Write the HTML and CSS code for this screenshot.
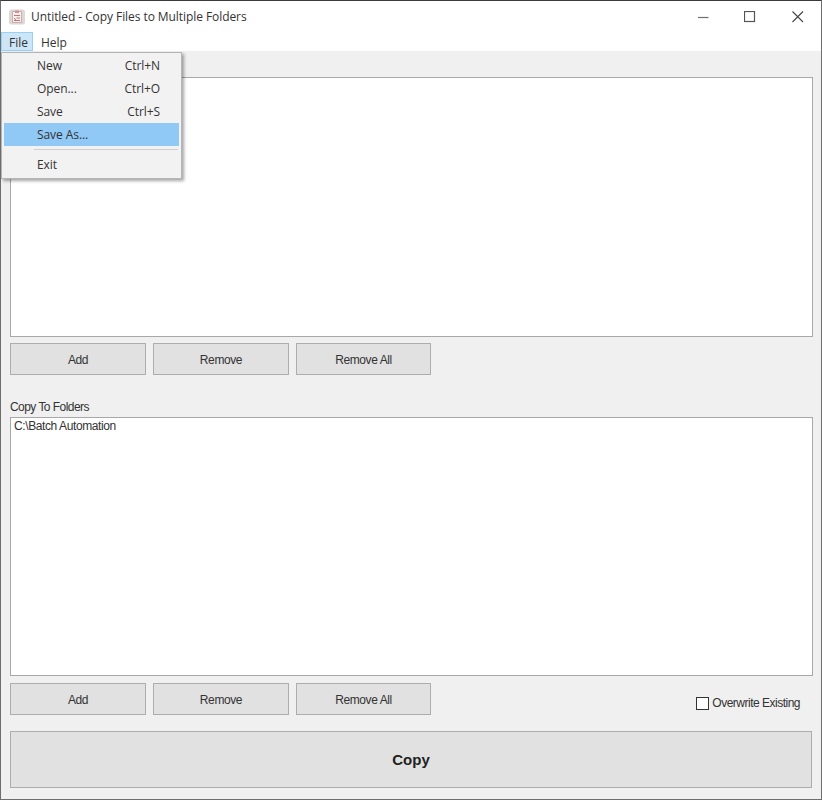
FILE: index.html
```html
<!DOCTYPE html>
<html lang="en">
<head>
<meta charset="utf-8">
<title>Untitled - Copy Files to Multiple Folders</title>
<link rel="stylesheet" href="styles.css">
</head>
<body>
<div class="window">
  <header class="titlebar">
    <svg class="app-icon" width="16" height="16" viewBox="0 0 16 16">
      <rect x="0" y="0.5" width="16" height="15" rx="2.5" fill="#dcd8d6"/>
      <rect x="3.5" y="2.5" width="9" height="11" fill="#f4eeed" stroke="#cfaeb0"/>
      <path d="M5 6.5h6M5 9l2 2M7.5 9H11M5 11.5h6" stroke="#c4747a" stroke-width="1" fill="none"/>
      <rect x="6" y="1.5" width="4" height="2.5" fill="#cf9397"/>
    </svg>
    <span class="title">Untitled - Copy Files to Multiple Folders</span>
    <div class="controls">
      <svg width="12" height="12" viewBox="0 0 12 12"><path d="M0 6.5h10.5" stroke="#6f6f6f" stroke-width="1.2"/></svg>
      <svg width="12" height="12" viewBox="0 0 12 12"><rect x="0.5" y="0.5" width="10" height="10" fill="none" stroke="#555" stroke-width="1.2"/></svg>
      <svg class="close" width="12" height="12" viewBox="0 0 12 12"><path d="M0.5 0.5l10.5 10.5M11 0.5L0.5 11" stroke="#444" stroke-width="1.1" fill="none"/></svg>
    </div>
  </header>
  <nav class="menubar">
    <span class="menu-item menu-open">File</span>
    <span class="menu-item menu-help">Help</span>
  </nav>
  <main class="content">
    <div class="caption"></div>
    <div class="listbox"></div>
    <div class="buttons">
      <button class="btn">Add</button>
      <button class="btn">Remove</button>
      <button class="btn btn-last">Remove All</button>
    </div>
    <label class="caption caption-second">Copy To Folders</label>
    <div class="listbox listbox-second"><div class="entry">C:\Batch Automation</div></div>
    <div class="buttons buttons-second">
      <button class="btn">Add</button>
      <button class="btn">Remove</button>
      <button class="btn btn-last">Remove All</button>
      <div class="overwrite"><span class="check"></span><span>Overwrite Existing</span></div>
    </div>
    <button class="copy">Copy</button>
  </main>
  <div class="dropdown">
    <div class="dd-row"><span>New</span><span>Ctrl+N</span></div>
    <div class="dd-row"><span>Open...</span><span>Ctrl+O</span></div>
    <div class="dd-row"><span>Save</span><span>Ctrl+S</span></div>
    <div class="dd-row dd-active"><span>Save As...</span><span></span></div>
    <div class="dd-sep"></div>
    <div class="dd-row"><span>Exit</span><span></span></div>
  </div>
</div>
</body>
</html>
```
FILE: styles.css
```css
* { box-sizing: border-box; }
html, body { margin: 0; padding: 0; }
body { width: 822px; height: 800px; overflow: hidden; background: #f0f0f0; }
.window {
  position: relative;
  width: 822px;
  height: 800px;
  display: flex;
  flex-direction: column;
  border: 1px solid #6e6e6e;
  border-top-color: #3a3a3a;
  background: #f0f0f0;
  font-family: "Open Sans", "Noto Sans", sans-serif;
  color: #222;
}
.titlebar {
  height: 31px;
  flex: none;
  display: flex;
  align-items: center;
  background: #fff;
  padding-left: 8px;
}
.app-icon { flex: none; margin-right: 6px; }
.title { font-size: 12px; color: #333; letter-spacing: -0.07px; }
.controls {
  margin-left: auto;
  display: flex;
  gap: 34px;
  padding-right: 17px;
  align-items: center;
}
.close { margin-left: 2px; }
.menubar {
  height: 19px;
  flex: none;
  display: flex;
  background: #fff;
  font-size: 12px;
}
.menu-item {
  height: 19px;
  line-height: 21px;
  padding: 0 7px;
  color: #333;
}
.menu-help { padding-left: 8px; }
.menu-open {
  width: 32px;
  padding: 0 0 0 7px;
  background: #cde6f7;
  border: 1px solid #99d1f5;
  line-height: 19px;
}
.content {
  flex: 1;
  display: flex;
  flex-direction: column;
  padding: 0 8px;
  font-family: "Liberation Sans", Arial, sans-serif;
  font-size: 12px;
  letter-spacing: -0.4px;
}
.caption { height: 26px; flex: none; padding-top: 7px; line-height: 14px; color: #333; }
.caption-second { height: 42px; padding: 25px 0 0 1px; line-height: 14px; letter-spacing: -0.55px; }
.listbox {
  height: 260px;
  flex: none;
  background: #fff;
  border: 1px solid #a8a8a8;
  width: 803px;
  margin-left: 1px;
}
.listbox-second { height: 259px; }
.entry { padding: 1px 0 0 3px; line-height: 14px; color: #333; }
.buttons {
  display: flex;
  gap: 7px;
  margin-top: 6px;
  height: 32px;
  flex: none;
  align-items: center;
  padding-left: 1px;
}
.buttons-second { margin-top: 7px; }
.btn {
  width: 136px;
  height: 32px;
  background: #e1e1e1;
  border: 1px solid #adadad;
  font: inherit;
  letter-spacing: inherit;
  color: #333;
  padding: 2px 0 0;
}
.btn-last { width: 135px; }
.overwrite {
  margin-left: auto;
  display: flex;
  align-items: center;
  gap: 3px;
  padding-right: 13px;
  padding-top: 8px;
  color: #333;
  letter-spacing: -0.5px;
}
.check {
  width: 13px;
  height: 13px;
  background: #fff;
  border: 1px solid #333;
}
.copy {
  margin-top: 16px;
  margin-left: 1px;
  width: 802px;
  height: 57px;
  flex: none;
  background: #e1e1e1;
  border: 1px solid #adadad;
  font-family: "Liberation Sans", Arial, sans-serif;
  font-size: 15px;
  font-weight: bold;
  color: #222;
  padding: 0;
}
.dropdown {
  position: absolute;
  left: 0;
  top: 51px;
  width: 181px;
  height: 127px;
  background: #f2f2f2;
  border: 1px solid #b5b5b5;
  box-shadow: 2px 2px 3px rgba(0,0,0,.35);
  padding: 1px 2px;
  font-size: 12px;
  letter-spacing: -0.07px;
  color: #333;
}
.dd-row {
  height: 23px;
  display: flex;
  justify-content: space-between;
  align-items: center;
  padding: 0 19px 0 33px;
}
.dd-active { background: #90c8f6; }
.dd-sep { height: 1px; margin: 3px 1px 3px 30px; background: #d0d0d0; }
```
